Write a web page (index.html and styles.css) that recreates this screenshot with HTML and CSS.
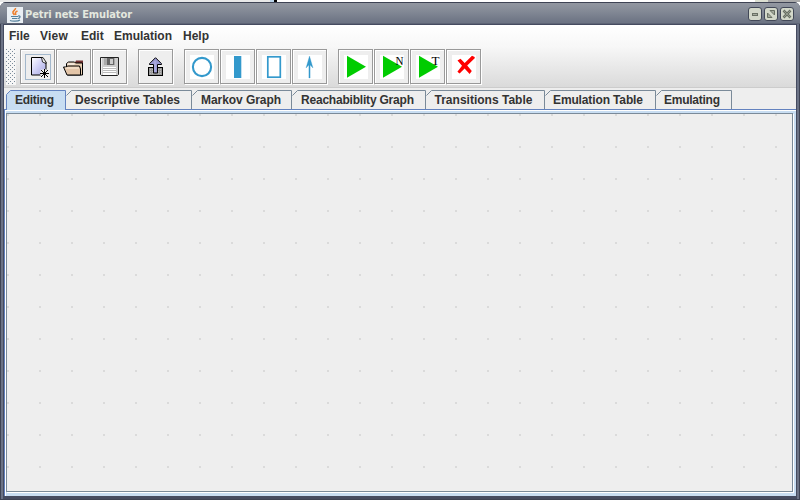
FILE: index.html
```
<!DOCTYPE html>
<html lang="en">
<head>
<meta charset="utf-8">
<title>Petri nets Emulator</title>
<link rel="stylesheet" href="styles.css">
</head>
<body>
<div class="backdrop"><i></i><b></b></div>
<div class="window">
  <header class="titlebar">
    <svg class="java" width="16" height="16" viewBox="0 0 16 16"><rect width="16" height="16" fill="#e9eef3"/><path d="M8.500 1C9 3 5 4 6 6l1.500 2M10.500 4C8 5 8 6 9 8" fill="none" stroke="#ee7f2d" stroke-width="1.600"/><path d="M4 9.500h7M5 11.500h5.500M3 13.500c2 1 8 1 10-.5M11 9c3-.5 2.500 2 0 2.500" fill="none" stroke="#56829e" stroke-width="1.200"/></svg>
    <h1>Petri nets Emulator</h1>
    <div class="controls">
      <svg viewBox="0 0 14 14"><rect class="cap" x=".5" y=".5" width="13" height="13" rx="2.500"/><rect x="4.500" y="6.500" width="5" height="2" fill="#a5ab9e" stroke="#697064"/></svg>
      <svg viewBox="0 0 14 14"><rect class="cap" x=".5" y=".5" width="13" height="13" rx="2.500"/><path d="M6 3.500h4.500V8zM3.500 6v4.500H8z" fill="#a5ab9e" stroke="#697064"/></svg>
      <svg viewBox="0 0 14 14"><rect class="cap" x=".5" y=".5" width="13" height="13" rx="2.500"/><path d="M3.500 3.500l7 7M10.500 3.500l-7 7" stroke="#697064" stroke-width="2.500"/><path d="M4 4l6 6M10 4l-6 6" stroke="#92998c"/></svg>
    </div>
  </header>
  <main class="content">
    <nav class="menu">
      <span class="m1">File</span><span class="m2">View</span><span class="m3">Edit</span><span class="m4">Emulation</span><span class="m5">Help</span>
    </nav>
    <div class="toolbar">
      <svg class="grip" width="10" height="36"><defs><pattern id="dots" width="4" height="4" patternUnits="userSpaceOnUse"><rect width="4" height="4" fill="#f6f6f6"/><path d="M0 0h1v1H0zM2 2h1v1H2z" fill="#7a8a99"/></pattern></defs><rect width="10" height="36" fill="url(#dots)"/></svg>
      <button><svg viewBox="1 1 33 33"><defs><linearGradient id="doc" x2="1" y2="1"><stop stop-color="#fff"/><stop offset=".5" stop-color="#cfcff6"/><stop offset="1" stop-color="#a4a4dc"/></linearGradient></defs><rect x="5.500" y="5.500" width="25" height="25" fill="none" stroke="#a3b8cc"/><path d="M11.500 8.500h10.500l4 5v12.500h-14.500z" fill="url(#doc)" stroke="#000"/><path d="M21.500 8.500l1 4.500 3.500 1.500v-1.500l-3-4.500z" fill="#eee" stroke="#000" stroke-width=".8"/><path d="M20 24.500h9M24.500 20v9M21 21l7 7M28 21l-7 7" stroke="#eee" stroke-width="2.500"/><path d="M20 24.500h9M24.500 20v9M21 21l7 7M28 21l-7 7" stroke="#000"/></svg></button>
      <button><svg viewBox="1 1 33 33"><g transform="translate(0 -.5)"><path d="M19 14l1-2h7v3h-8z" fill="#733"/><path d="M10.500 19v-4l2-1.500h6l1 1h7v12h-15z" fill="#ead0b4" stroke="#000"/><path d="M11.500 15.500h7" stroke="#fff"/><path d="M7.500 18.500h3l1-1h12l1 3v6h-13.500z" fill="#e3c5a8" stroke="#000"/><path d="M9 19.500h14" stroke="#fff0df"/></g></svg></button>
      <button><svg viewBox="1 1 33 33"><g transform="translate(-1 0)"><path d="M9.500 8.500h18v17l-1 1h-16l-1-1v-17z" fill="#ccc" stroke="#222"/><path d="M10.500 9v16.500" stroke="#eee"/><rect x="13" y="9" width="11" height="7" fill="#aaa"/><rect x="16" y="9" width="7" height="7" fill="#666"/><rect x="19" y="10" width="3" height="5" fill="#ccc"/><rect x="12" y="18" width="13" height="8" fill="#fff"/><path d="M12 19.500h13M12 21.500h13M12 23.500h13" stroke="#bbb"/></g></svg></button>
      <i class="gap"></i>
      <button><svg viewBox="1 1 33 33"><rect x="10.500" y="18.500" width="14" height="8" fill="#999" stroke="#000"/><path d="M12 20.500h12M12 22.500h12M12 24.500h12" stroke="#bbb" stroke-dasharray="1 1"/><path d="M17.500 8.700l6 6v.8h-4v8.500h-4v-8.500h-4v-.8z" fill="#9a9ad2" stroke="#000"/><path d="M17 12v11" stroke="#b8b8ea"/></svg></button>
      <i class="gap"></i>
      <button><svg viewBox="1 1 33 33"><rect x="6" y="6" width="24" height="24" fill="#fff"/><circle cx="18" cy="18" r="9.100" fill="none" stroke="#39c" stroke-width="2.100"/></svg></button>
      <button><svg viewBox="1 1 33 33"><rect x="6" y="6" width="24" height="24" fill="#fff"/><rect x="14" y="7" width="7.300" height="22" fill="#39c"/></svg></button>
      <button><svg viewBox="1 1 33 33"><rect x="6" y="6" width="24" height="24" fill="#fff"/><rect x="11.800" y="7.800" width="12.500" height="20.400" fill="none" stroke="#39c" stroke-width="1.700"/></svg></button>
      <button><svg viewBox="1 1 33 33"><rect x="6" y="6" width="24" height="24" fill="#fff"/><path d="M17.500 7l3.500 12-2.900-3v13h-1.200V16l-2.900 3z" fill="#39c" stroke="#39c" stroke-width=".3"/></svg></button>
      <i class="gap"></i>
      <button><svg viewBox="1 1 33 33"><rect x="6" y="6" width="24" height="24" fill="#fff"/><path d="M9 6.700l19 11L9 28.700z" fill="#0c0"/></svg></button>
      <button><svg viewBox="1 1 33 33"><rect x="6" y="6" width="24" height="24" fill="#fff"/><path d="M9 6.700l19 11L9 28.700z" fill="#0c0"/><text class="letter" x="21.500" y="16" textLength="8" lengthAdjust="spacingAndGlyphs">N</text></svg></button>
      <button><svg viewBox="1 1 33 33"><rect x="6" y="6" width="24" height="24" fill="#fff"/><path d="M9 6.700l19 11L9 28.700z" fill="#0c0"/><text class="letter" x="21.500" y="16" textLength="8" lengthAdjust="spacingAndGlyphs">T</text></svg></button>
      <button><svg viewBox="1 1 33 33"><rect x="6" y="6" width="24" height="24" fill="#fff"/><path d="M11.500 11.500l3-1.800 4.200 4.300L26 6.700l2.700 1.200v1.300L21.200 16.500l4.600 5.500-2.200 3-5-5.500-5 5.100-2.200-1.800 4.600-6z" fill="#f00"/></svg></button>
    </div>
    <nav class="tabs">
      <svg class="tab active" width="60" height="20"><path d="M.5 20V4.500l4-4h55V20"/><text x="9" y="14" textLength="39">Editing</text></svg>
      <svg class="tab" width="126" height="20"><path d="M.5 5.500l5-5h120V20"/><text x="9" y="14" textLength="105">Descriptive Tables</text></svg>
      <svg class="tab" width="100" height="20"><path d="M.5 5.500l5-5h94V20"/><text x="9" y="14" textLength="80">Markov Graph</text></svg>
      <svg class="tab" width="134" height="20"><path d="M.5 5.500l5-5h128V20"/><text x="9" y="14" textLength="113">Reachabiblity Graph</text></svg>
      <svg class="tab" width="119" height="20"><path d="M.5 5.500l5-5h113V20"/><text x="8.500" y="14" textLength="98">Transitions Table</text></svg>
      <svg class="tab" width="111" height="20"><path d="M.5 5.500l5-5h105V20"/><text x="8" y="14" textLength="90">Emulation Table</text></svg>
      <svg class="tab" width="76" height="20"><path d="M.5 5.500l5-5h70V20"/><text x="8" y="14" textLength="56">Emulating</text></svg>
    </nav>
    <section class="pane"><div class="canvas"></div></section>
  </main>
</div>
</body>
</html>
```
FILE: styles.css
```
* { box-sizing: border-box; }
body { margin: 0; width: 800px; height: 500px; overflow: hidden; background: #fff; font: bold 12px "Liberation Sans", sans-serif; color: #333; }
.backdrop { height: 2px; display: flex; background: linear-gradient(90deg, #e8e8e8 270px, #fff 270px 755px, #dce0d2 755px 768px, #aaa 768px); }
.backdrop i { width: 4px; margin-left: 270px; background: #b9d3e8; }
.backdrop b { width: 3px; background: #000; }
.window { height: 498px; padding: 0 4px; border-bottom: 1px solid #3e4354; border-radius: 6px 6px 0 0; background: linear-gradient(90deg, #3e4354 1px, #6b7285 1px 3px, #454b60 3px 797px, #6b7285 797px 799px, #3e4354 799px); overflow: hidden; }
.titlebar { height: 22px; margin: 0 -4px; padding: 3px 6px 0 7px; display: flex; align-items: flex-start; border-top: 1px solid #3e4354; background: linear-gradient(#9297a1, #858b97 35%, #6d7484 90%); box-shadow: inset 0 -1px #5d6475; }
.java { margin-top: 1px; }
h1 { margin: 1px 0 0 2px; color: #e4e8df; white-space: nowrap; font: bold 11px/16px "DejaVu Sans Condensed", "DejaVu Sans", sans-serif; letter-spacing: -.1px; }
.controls { margin-left: auto; display: flex; gap: 2px; margin-top: 1px; }
.controls svg { width: 14px; height: 14px; }
.cap { fill: #d3d8ca; stroke: #424858; }
.content { height: 472px; background: #eee; border-top: 1px solid #454b60; display: flex; flex-direction: column; }
.menu { height: 22px; flex: none; display: flex; line-height: 22px; padding-left: 5px; background: linear-gradient(#fff, #f7f7f7); }
.m1 { width: 31px; }
.m2 { width: 41px; letter-spacing: .2px; }
.m3 { width: 33px; }
.m4 { width: 69px; }
.toolbar { height: 41px; flex: none; display: flex; padding: 2px 0 0 2px; background: linear-gradient(#f7f7f7, #dadada); border-bottom: 1px solid #ccc; }
.grip { flex: none; margin-right: 4px; }
button { width: 35px; height: 35px; flex: none; margin: 0 1px 0 0; padding: 0; border: 1px solid #999; background: #eee; box-shadow: 1px 1px #fff, inset 1px 1px #fff; }
button svg { display: block; width: 33px; height: 33px; }
.gap { width: 10px; }
.letter { font: 12px "Liberation Serif", serif; fill: #000; }
.tabs { height: 21px; flex: none; display: flex; padding: 2px 0 0 2px; }
.tab { display: block; flex: none; height: 19px; fill: #333; }
.tab path { fill: #eee; stroke: #7a8a99; }
.tab.active { height: 20px; position: relative; }
.tab.active path { fill: #c8ddf2; stroke: #6382bf; }
.pane { flex: 1; padding: 3px 3px 3px 1px; border-top: 1px solid #6382bf; border-left: 1px solid #6382bf; background: #c8ddf2; box-shadow: inset 1px 1px #fff; }
.canvas { height: 379px; border: 1px solid #7a8a99; box-shadow: 1px 1px #fff; background: conic-gradient(from 0deg at 2px 2px, transparent 270deg, #dadada 0) 0 0 / 32px 32px, #eee; }
```
